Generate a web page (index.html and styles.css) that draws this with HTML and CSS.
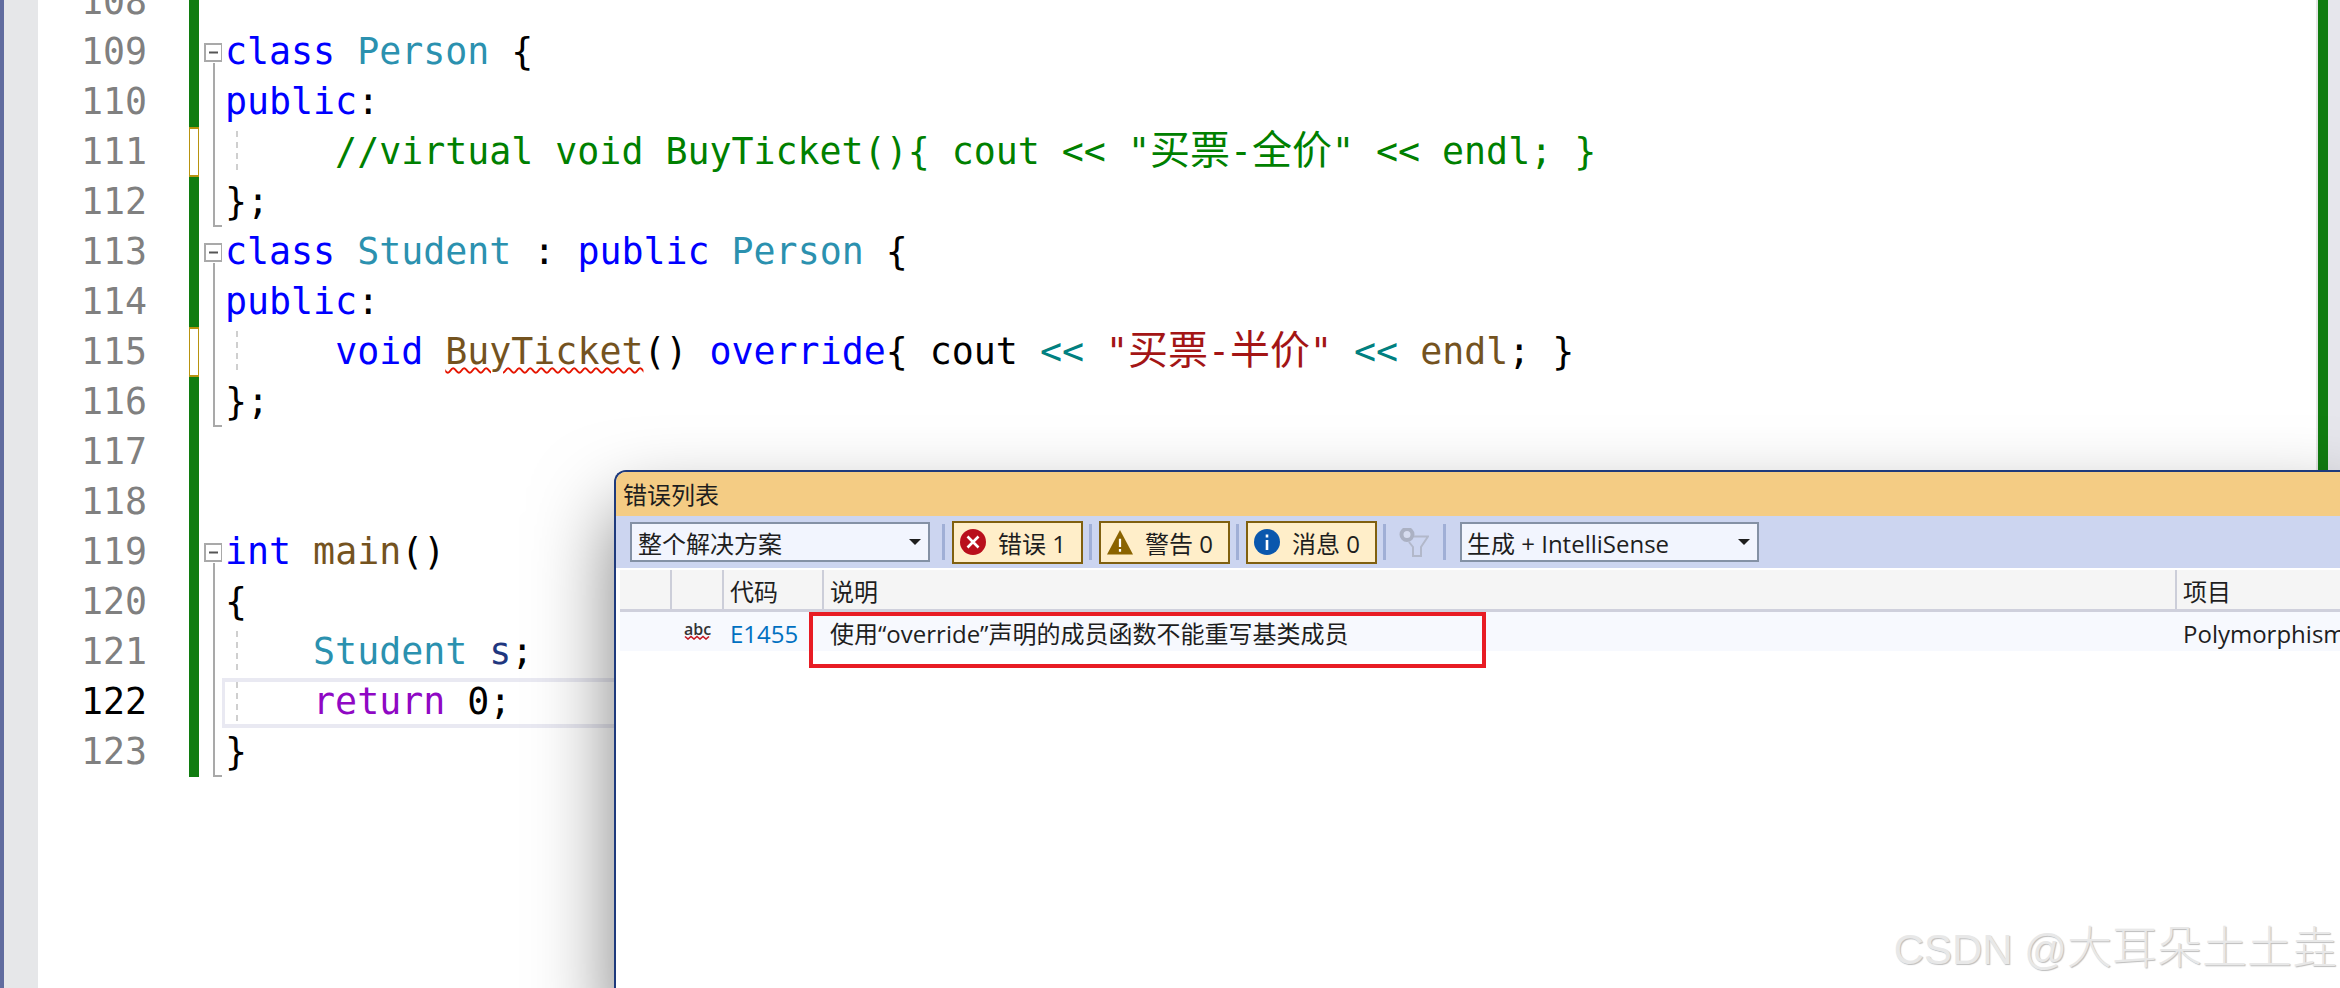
FILE: index.html
```html
<!DOCTYPE html>
<html lang="zh-CN">
<head>
<meta charset="utf-8">
<title>错误列表</title>
<link rel="stylesheet" href="styles.css">
</head>
<body>
<svg class="sprite" xmlns="http://www.w3.org/2000/svg">
  <symbol id="f-open" viewBox="0 0 23 50"><rect x="6" y="17" width="17" height="17" fill="#fff" stroke="#a9a9a9" stroke-width="2"/><path d="M10 25.5h9" stroke="#555" stroke-width="2"/><path d="M15 36v14" stroke="#a9a9a9" stroke-width="2"/></symbol>
  <symbol id="f-mid" viewBox="0 0 23 50"><path d="M15 0v50" stroke="#a9a9a9" stroke-width="2"/></symbol>
  <symbol id="f-end" viewBox="0 0 23 50"><path d="M15 0v49h8" fill="none" stroke="#a9a9a9" stroke-width="2"/></symbol>
</svg>
<div class="app">
  <div class="strip"></div>
  <div class="gutter"></div>
  <div class="editor">
    <div class="line"><div class="num">108</div><div class="chg"></div><div class="fold"></div><div class="code"></div></div>
    <div class="line"><div class="num">109</div><div class="chg"></div><svg class="fold"><use href="#f-open"/></svg><div class="code"><span class="kw">class</span> <span class="ty">Person</span> {</div></div>
    <div class="line"><div class="num">110</div><div class="chg"></div><svg class="fold"><use href="#f-mid"/></svg><div class="code"><span class="kw">public</span>:</div></div>
    <div class="line"><div class="num">111</div><div class="chg mod"></div><svg class="fold"><use href="#f-mid"/></svg><div class="code dash"><span class="cm">     //virtual void BuyTicket(){ cout &lt;&lt; "<span class="zh">买票</span>-<span class="zh">全价</span>" &lt;&lt; endl; }</span></div></div>
    <div class="line"><div class="num">112</div><div class="chg"></div><svg class="fold"><use href="#f-end"/></svg><div class="code">};</div></div>
    <div class="line"><div class="num">113</div><div class="chg"></div><svg class="fold"><use href="#f-open"/></svg><div class="code"><span class="kw">class</span> <span class="ty">Student</span> : <span class="kw">public</span> <span class="ty">Person</span> {</div></div>
    <div class="line"><div class="num">114</div><div class="chg"></div><svg class="fold"><use href="#f-mid"/></svg><div class="code"><span class="kw">public</span>:</div></div>
    <div class="line"><div class="num">115</div><div class="chg mod"></div><svg class="fold"><use href="#f-mid"/></svg><div class="code dash">     <span class="kw">void</span> <span class="fn err">BuyTicket</span>() <span class="kw">override</span>{ cout <span class="op">&lt;&lt;</span> <span class="str">"<span class="zh">买票</span>-<span class="zh">半价</span>"</span> <span class="op">&lt;&lt;</span> <span class="fn">endl</span>; }</div></div>
    <div class="line"><div class="num">116</div><div class="chg"></div><svg class="fold"><use href="#f-end"/></svg><div class="code">};</div></div>
    <div class="line"><div class="num">117</div><div class="chg"></div><div class="fold"></div><div class="code"></div></div>
    <div class="line"><div class="num">118</div><div class="chg"></div><div class="fold"></div><div class="code"></div></div>
    <div class="line"><div class="num">119</div><div class="chg"></div><svg class="fold"><use href="#f-open"/></svg><div class="code"><span class="kw">int</span> <span class="fn">main</span>()</div></div>
    <div class="line"><div class="num">120</div><div class="chg"></div><svg class="fold"><use href="#f-mid"/></svg><div class="code">{</div></div>
    <div class="line"><div class="num">121</div><div class="chg"></div><svg class="fold"><use href="#f-mid"/></svg><div class="code dash">    <span class="ty">Student</span> <span class="var">s</span>;</div></div>
    <div class="line"><div class="num cur">122</div><div class="chg"></div><svg class="fold"><use href="#f-mid"/></svg><div class="code dash current">    <span class="ctl">return</span> 0;</div></div>
    <div class="line"><div class="num">123</div><div class="chg"></div><svg class="fold"><use href="#f-end"/></svg><div class="code">}</div></div>
  </div>
  <div class="scroll"><div class="scroll-bar"></div></div>
</div>

<section class="panel">
  <div class="panel-title">错误列表</div>
  <div class="toolbar">
    <div class="combo combo-scope"><span>整个解决方案</span><i class="arrow"></i></div>
    <div class="sep"></div>
    <div class="toggle">
      <svg class="ico" viewBox="0 0 26 26"><circle cx="13" cy="13" r="13" fill="#b90f1c"/><path d="M7.5 7.5l11 11M18.5 7.5l-11 11" stroke="#fff" stroke-width="2.6"/></svg>
      <span>错误 1</span>
    </div>
    <div class="sep"></div>
    <div class="toggle">
      <svg class="ico" viewBox="0 0 28 27"><path d="M14 0.5L28 27H0z" fill="#8a6300"/><path d="M14 10v9M14 21v3" stroke="#fff" stroke-width="2.4"/></svg>
      <span>警告 0</span>
    </div>
    <div class="sep"></div>
    <div class="toggle">
      <svg class="ico" viewBox="0 0 26 26"><circle cx="13" cy="13" r="13" fill="#0a57ad"/><path d="M13 5.5v3M13 11v10" stroke="#fff" stroke-width="2.6"/></svg>
      <span>消息 0</span>
    </div>
    <div class="sep"></div>
    <svg class="filter" viewBox="0 0 30 29"><circle cx="8" cy="6.5" r="5.5" fill="#d6dcef" stroke="#abb1c3" stroke-width="4"/><path d="M15 8.5H29L22 19v9h-8V19l-4-5" fill="none" stroke="#b2b8ca" stroke-width="2"/></svg>
    <div class="sep"></div>
    <div class="combo combo-kind"><span>生成 + IntelliSense</span><i class="arrow"></i></div>
  </div>
  <div class="table">
    <div class="thead">
      <div class="th"></div>
      <div class="th"></div>
      <div class="th">代码</div>
      <div class="th">说明</div>
      <div class="th">项目</div>
    </div>
    <div class="tr">
      <div class="td"></div>
      <div class="td td-icon">
        <span class="abc">abc<svg class="wave" viewBox="0 0 26 5"><path d="M1 1.5l3 2.5 3-2.5 3 2.5 3-2.5 3 2.5 3-2.5 3 2.5 3-2.5" fill="none" stroke="#c4161f" stroke-width="1.6"/></svg></span>
      </div>
      <div class="td td-code">E1455</div>
      <div class="td">使用“override”声明的成员函数不能重写基类成员</div>
      <div class="td">Polymorphism</div>
    </div>
  </div>
  <div class="redbox"></div>
</section>

<div class="watermark"><span class="wm-latin">CSDN @</span><span class="wm-zh">大耳朵土土垚</span></div>
</body>
</html>
```

FILE: styles.css
```css
* { box-sizing: border-box; }

html, body {
  margin: 0;
  height: 988px;
  overflow: hidden;
  background: #fff;
}

.sprite { display: none; }

.app {
  display: flex;
  height: 988px;
  overflow: hidden;
}

.strip { width: 3.5px; background: #616c9f; flex: none; }
.gutter { width: 34.5px; background: #e6e7e9; flex: none; }

.editor {
  flex: 1;
  margin-top: -23px;
  min-width: 0;
  font-family: "DejaVu Sans Mono", "Noto Sans CJK SC", monospace;
  font-size: 36.6px;
  color: #000;
}

.line { display: flex; height: 50px; }

.num {
  width: 109px;
  margin-right: 42px;
  text-align: right;
  line-height: 50px;
  color: #808080;
  flex: none;
}
.num.cur { color: #000; }

.chg { width: 10px; background: #107c10; flex: none; }
.chg.mod { background: #fff; border: 2px solid #b8930f; border-left-width: 1px; border-right-width: 1px; }

.fold { width: 23px; height: 50px; flex: none; display: block; }

.code {
  flex: 1;
  padding-left: 3px;
  white-space: pre;
  line-height: 50px;
}
.code.dash {
  background-image: repeating-linear-gradient(to bottom, #cfcfcf 0 6px, transparent 6px 11px);
  background-size: 2px 42px;
  background-position: 14px 4px;
  background-repeat: no-repeat;
}
.code.current {
  height: 50px;
  margin-top: 1px;
  border: solid #e9e9f2;
  border-width: 4px 0 4px 3px;
  padding-left: 0;
  line-height: 40px;
  background-size: 2px 40px;
  background-position: 11px 0;
}

.kw { color: #0000ff; }
.ty { color: #2b91af; }
.cm { color: #008000; }
.fn { color: #74531f; }
.op { color: #008080; }
.str { color: #a31515; }
.var { color: #1f377f; }
.ctl { color: #8f08c4; }
.zh { font-family: "Noto Sans CJK SC", sans-serif; font-size: 40px; line-height: 1; }

.err {
  text-decoration: underline wavy #e51400;
  text-decoration-thickness: 1.5px;
  text-underline-offset: 3px;
}

.scroll {
  width: 24px;
  flex: none;
  border-left: 2px solid #e6e6e6;
  background: #e6e6ec;
}
.scroll-bar { width: 10px; height: 100%; background: #107c10; }

.panel {
  position: absolute;
  left: 614px;
  top: 470px;
  right: -20px;
  bottom: -20px;
  background: #fff;
  border: 2px solid #1e3a7c;
  border-right: 0;
  border-bottom: 0;
  border-top-left-radius: 12px;
  box-shadow: 0 40px 80px rgba(0, 0, 0, 0.5);
  font-family: "Open Sans", "Noto Sans CJK SC", sans-serif;
  font-size: 24px;
  color: #1e1e1e;
}

.panel-title {
  height: 44px;
  padding-left: 7px;
  line-height: 46px;
  background: #f4cc84;
  border-top-left-radius: 10px;
}

.toolbar {
  display: flex;
  align-items: center;
  height: 52px;
  padding-left: 14px;
  background: #ccd5f0;
}

.combo {
  display: flex;
  align-items: center;
  justify-content: space-between;
  height: 40px;
  padding: 0 7px 0 6px;
  border: 2px solid #8491a5;
  background: #f2f5fe;
}
.combo-scope { width: 300px; margin-right: 6px; }
.combo-kind { width: 299px; margin-left: 7px; padding-left: 5px; }

.arrow {
  width: 0;
  height: 0;
  border-style: solid;
  border-width: 6px 6px 0;
  border-color: #1e1e1e transparent transparent;
}

.sep { width: 3px; height: 36px; margin: 0 7px 0 6px; background: #a0afd6; flex: none; }

.toggle {
  display: flex;
  align-items: center;
  gap: 12px;
  width: 131px;
  height: 43px;
  padding-left: 6px;
  border: 2px solid #80600f;
  background: #ffeec9;
}
.ico { width: 26px; height: 26px; flex: none; }

.filter { width: 30px; height: 29px; margin: 0 8px 0 6px; flex: none; }

.table { padding-left: 4px; }

.thead, .tr {
  display: grid;
  grid-template-columns: 50px 52px 100px 1353px 1fr;
  white-space: nowrap;
}

.thead {
  height: 42px;
  margin-top: 2px;
  background: #f5f5f5;
  border-bottom: 3px solid #cfd0dc;
}
.th {
  padding-left: 6px;
  border-left: 2px solid #ccced9;
  line-height: 44px;
  height: 39px;
}
.th:first-child { border-left: 0; }

.tr { height: 39px; background: #f7f9fe; }
.td { padding-left: 8px; line-height: 44px; height: 39px; }
.td-icon { padding: 12px 0 0 14px; line-height: 1; }
.td-code { color: #0070c1; }

.abc {
  display: block;
  width: 26px;
  font-size: 16px;
  font-weight: 600;
  line-height: 11px;
  color: #333;
  text-align: center;
}
.wave { display: block; width: 26px; height: 5px; }

.redbox {
  position: absolute;
  left: 193px;
  top: 140px;
  width: 677px;
  height: 56px;
  border: 4px solid #e81c24;
}

.watermark {
  position: absolute;
  right: 3px;
  top: 912px;
  display: flex;
  align-items: baseline;
  color: #e8e8e8;
  text-shadow: 1px 1px 1px #bdbdbd;
}
.wm-latin { font-family: "Liberation Sans", sans-serif; font-size: 42px; }
.wm-zh { font-family: "Noto Sans CJK SC", sans-serif; font-size: 45px; font-weight: 300; }
```
